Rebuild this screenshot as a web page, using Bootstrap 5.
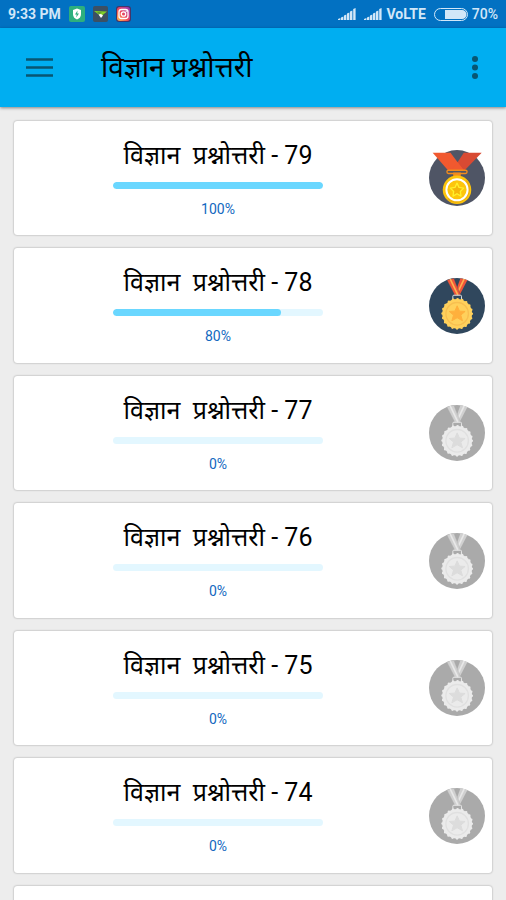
<!DOCTYPE html>
<html lang="hi">
<head>
<meta charset="utf-8">
<meta name="viewport" content="width=device-width, initial-scale=1">
<title>विज्ञान प्रश्नोत्तरी</title>
<link href="https://cdn.jsdelivr.net/npm/bootstrap@5.3.0/dist/css/bootstrap.min.css" rel="stylesheet">
<style>
  body { background: #ededed; font-family: Roboto, "Noto Sans", "Noto Sans Devanagari", sans-serif; }
  .status-bar { background: #0271c2; color: #d2e7f8; height: 28px; font-size: 14px; line-height: 28px; font-weight: 700; padding: 0 8px; }
  .battery-level { font-weight: 500; }
  .app-bar { background: #00aef1; height: 79px; padding: 0 16px 0 20px; box-shadow: 0 1px 3px rgba(0,0,0,.45); z-index: 1; }
  .app-title { font-size: 28px; line-height: 40px; color: #000; margin-left: 43px; }
  .quiz-list { padding: 14px; gap: 13px; scrollbar-width: none; }
  .quiz-list::-webkit-scrollbar { display: none; }
  .quiz { min-height: 114px; padding: 0 7px; border-radius: 3px; background: #fff; box-shadow: 0 0 2px rgba(0,0,0,.4); }
  .quiz:nth-child(even) { min-height: 115px; }
  .quiz-body { padding: 0 14px 2px 0; }
  .quiz-title { font-size: 25px; line-height: 40px; color: #000; }
  .quiz .progress { width: 210px; height: 7px; border-radius: 4px; margin-top: 6px; background: #e3f7ff; }
  .quiz .progress-bar { background: #6ad7ff; border-radius: 4px; }
  .quiz-score { font-size: 14px; line-height: 20px; color: #1268c0; margin-top: 10px; }
  .medal { width: 56px; height: 56px; overflow: visible; }
  .medal-color { --disc: #30475d; --ribbon: #f0563b; --stripe: #ffb34f; --clasp: #dce5ea; --coin: #ffd15c; --ring: #f8bf50; --star: #ffb03c; }
  .medal-grey { --disc: #aaa; --ribbon: #d0d0d0; --stripe: #e8e8e8; --clasp: #e8e8e8; --coin: #ebebeb; --ring: #e0e0e0; --star: #dcdcdc; }
</style>
<script src="https://cdn.jsdelivr.net/npm/bootstrap@5.3.0/dist/js/bootstrap.bundle.min.js"></script>
</head>
<body>
<svg class="d-none" aria-hidden="true">
  <symbol id="signal" viewBox="0 0 18 12">
    <path fill="currentColor" d="M0 12v-1l2.400-1v2zM3 12V9.500l2.400-1V12zM6 12V7.500l2.400-1V12zM9 12V5.500l2.400-1V12zM12 12V3.500l2.400-1V12zM15.200 12V1l2.400-1v12z"/>
  </symbol>
  <symbol id="medal" viewBox="26 28 169 169">
    <circle cx="110.500" cy="112.500" r="84.500" fill="var(--disc)"/>
    <path fill="var(--ribbon)" d="M121 29l21 5-24 46h-16z"/>
    <path fill="none" stroke="var(--stripe)" stroke-width="5" d="M132 31l-23 48"/>
    <path fill="var(--ribbon)" stroke="var(--disc)" d="M80 34l21-5 20 51h-17z"/>
    <path fill="none" stroke="var(--stripe)" stroke-width="5" d="M90 31l23 48"/>
    <path fill="none" stroke="var(--clasp)" stroke-width="3" d="M98 94V83q0-3 3-3h20q3 0 3 3v11"/>
    <circle cx="111" cy="136" r="44" fill="none" stroke="var(--coin)" stroke-width="8" stroke-linecap="round" stroke-dasharray="0 13.820"/>
    <circle cx="111" cy="136" r="45" fill="var(--coin)"/>
    <circle cx="111" cy="136" r="34" fill="none" stroke="var(--ring)" stroke-width="4"/>
    <path fill="var(--star)" stroke="var(--star)" stroke-width="3" stroke-linejoin="round" d="M111 112l7 16 17 1-13 11 5 17-16-9-16 9 5-17-13-11 17-1z"/>
  </symbol>
</svg>

<div class="vh-100 d-flex flex-column overflow-hidden">
  <div class="status-bar d-flex align-items-center flex-shrink-0">
    <span>9:33 PM</span>
    <svg class="ms-2" width="16" height="16" viewBox="0 0 16 16" aria-hidden="true"><rect width="16" height="16" rx="2" fill="#2daf7d"/><path fill="#fff" d="M8 2.500l4 1.500v4q0 4-4 5.500Q4 12 4 8V4z"/><path fill="#2daf7d" d="M8.500 4.500L6 8.500h1.700l-.5 3 2.800-4H8.200z"/></svg>
    <svg class="ms-2" width="15" height="16" viewBox="0 0 15 16" aria-hidden="true"><rect width="15" height="16" rx="2" fill="#3c5063"/><path fill="#80cf28" d="M1 5l13 .5L8.500 10 5 8z"/><path fill="#294153" d="M4 6.500l5 .3-3 .7z"/><path fill="#fff" d="M5.500 8.500L8 8l2 1.500L8 12z"/></svg>
    <svg class="ms-2" width="15" height="16" viewBox="0 0 15 16" aria-hidden="true"><defs><linearGradient id="insta" x1="0" y1="1" x2="1" y2="0"><stop offset="0" stop-color="#ffc34d"/><stop offset=".45" stop-color="#f14858"/><stop offset="1" stop-color="#8a3ac4"/></linearGradient></defs><rect width="15" height="16" rx="3" fill="#443568"/><rect x="1" y="1" width="13" height="14" rx="3" fill="url(#insta)"/><g fill="none" stroke="#fff" stroke-width="1.300"><rect x="3" y="3.500" width="9" height="9" rx="2.500"/><circle cx="7.500" cy="8" r="2.200"/></g><circle cx="10.200" cy="5.300" r=".7" fill="#fff"/></svg>
    <svg class="ms-auto" width="18" height="12" aria-hidden="true"><use href="#signal"/></svg>
    <svg class="ms-2" width="18" height="12" aria-hidden="true"><use href="#signal"/></svg>
    <span class="ms-1">VoLTE</span>
    <svg class="ms-2" width="34" height="13" viewBox="0 0 34 13" aria-hidden="true"><rect x=".5" y=".5" width="33" height="12" rx="6" fill="none" stroke="currentColor"/><path fill="currentColor" d="M11 2h17a4.500 4.500 0 0 1 0 9H11z"/></svg>
    <span class="battery-level ms-1">70%</span>
  </div>

  <header class="app-bar d-flex align-items-center flex-shrink-0 position-relative">
    <button type="button" class="btn border-0 p-1 d-flex" aria-label="मेनू">
      <svg width="30" height="26" viewBox="0 0 30 26" aria-hidden="true"><path stroke="#085672" stroke-width="2.500" d="M2 4.500h27M2 12.500h27M2 20.500h27"/></svg>
    </button>
    <h1 class="app-title mb-0 fw-normal">विज्ञान प्रश्नोत्तरी</h1>
    <button type="button" class="btn border-0 p-1 ms-auto d-flex" aria-label="और विकल्प">
      <svg width="22" height="26" viewBox="0 0 22 26" aria-hidden="true"><g fill="#085672"><circle cx="11" cy="4" r="3"/><circle cx="11" cy="12.500" r="3"/><circle cx="11" cy="21" r="3"/></g></svg>
    </button>
  </header>

  <main class="quiz-list flex-grow-1 overflow-auto d-flex flex-column">
    <a href="#quiz-79" class="quiz d-flex align-items-center flex-shrink-0 text-decoration-none">
      <div class="quiz-body flex-grow-1 d-flex flex-column align-items-center">
        <h2 class="quiz-title mb-0 fw-normal">विज्ञान&nbsp; प्रश्नोत्तरी - 79</h2>
        <div class="progress" role="progressbar" aria-label="79" aria-valuenow="100" aria-valuemin="0" aria-valuemax="100"><div class="progress-bar" style="width:100%"></div></div>
        <div class="quiz-score">100%</div>
      </div>
      <svg class="medal flex-shrink-0" viewBox="26 28 169 169" aria-hidden="true">
        <circle cx="110.500" cy="112.500" r="84.500" fill="#4f5565"/>
        <path fill="#d84a33" d="M131 36h54l-52 54H96z"/>
        <path fill="#f1592f" d="M37 36h54l40 54H84z"/>
        <path fill="#f1592f" d="M84 66l8 24h-8zM92 90l20-25 20 25z"/>
        <rect x="80" y="89" width="61" height="10" rx="5" fill="#4f5565" stroke="#f28c1c" stroke-width="4"/>
        <path fill="#f28c1c" d="M99 96h23v14H99z"/>
        <circle cx="110.500" cy="148" r="43" fill="#fdc50c"/>
        <path fill="#eeb00a" d="M140 117a43 43 0 0 1-60 61z"/>
        <circle cx="110.500" cy="148" r="32" fill="#fdc50c" stroke="#fff" stroke-width="6"/>
        <path fill="#f5b60b" stroke="#fff02c" stroke-width="4" stroke-linejoin="round" d="M110.500 128l6 13 14 2-10 10 2 14-12-7-12 7 2-14-10-10 14-2z"/>
      </svg>
    </a>
    <a href="#quiz-78" class="quiz d-flex align-items-center flex-shrink-0 text-decoration-none">
      <div class="quiz-body flex-grow-1 d-flex flex-column align-items-center">
        <h2 class="quiz-title mb-0 fw-normal">विज्ञान&nbsp; प्रश्नोत्तरी - 78</h2>
        <div class="progress" role="progressbar" aria-label="78" aria-valuenow="80" aria-valuemin="0" aria-valuemax="100"><div class="progress-bar" style="width:80%"></div></div>
        <div class="quiz-score">80%</div>
      </div>
      <svg class="medal medal-color flex-shrink-0" aria-hidden="true"><use href="#medal"/></svg>
    </a>
    <a href="#quiz-77" class="quiz d-flex align-items-center flex-shrink-0 text-decoration-none">
      <div class="quiz-body flex-grow-1 d-flex flex-column align-items-center">
        <h2 class="quiz-title mb-0 fw-normal">विज्ञान&nbsp; प्रश्नोत्तरी - 77</h2>
        <div class="progress" role="progressbar" aria-label="77" aria-valuenow="0" aria-valuemin="0" aria-valuemax="100"><div class="progress-bar" style="width:0%"></div></div>
        <div class="quiz-score">0%</div>
      </div>
      <svg class="medal medal-grey flex-shrink-0" aria-hidden="true"><use href="#medal"/></svg>
    </a>
    <a href="#quiz-76" class="quiz d-flex align-items-center flex-shrink-0 text-decoration-none">
      <div class="quiz-body flex-grow-1 d-flex flex-column align-items-center">
        <h2 class="quiz-title mb-0 fw-normal">विज्ञान&nbsp; प्रश्नोत्तरी - 76</h2>
        <div class="progress" role="progressbar" aria-label="76" aria-valuenow="0" aria-valuemin="0" aria-valuemax="100"><div class="progress-bar" style="width:0%"></div></div>
        <div class="quiz-score">0%</div>
      </div>
      <svg class="medal medal-grey flex-shrink-0" aria-hidden="true"><use href="#medal"/></svg>
    </a>
    <a href="#quiz-75" class="quiz d-flex align-items-center flex-shrink-0 text-decoration-none">
      <div class="quiz-body flex-grow-1 d-flex flex-column align-items-center">
        <h2 class="quiz-title mb-0 fw-normal">विज्ञान&nbsp; प्रश्नोत्तरी - 75</h2>
        <div class="progress" role="progressbar" aria-label="75" aria-valuenow="0" aria-valuemin="0" aria-valuemax="100"><div class="progress-bar" style="width:0%"></div></div>
        <div class="quiz-score">0%</div>
      </div>
      <svg class="medal medal-grey flex-shrink-0" aria-hidden="true"><use href="#medal"/></svg>
    </a>
    <a href="#quiz-74" class="quiz d-flex align-items-center flex-shrink-0 text-decoration-none">
      <div class="quiz-body flex-grow-1 d-flex flex-column align-items-center">
        <h2 class="quiz-title mb-0 fw-normal">विज्ञान&nbsp; प्रश्नोत्तरी - 74</h2>
        <div class="progress" role="progressbar" aria-label="74" aria-valuenow="0" aria-valuemin="0" aria-valuemax="100"><div class="progress-bar" style="width:0%"></div></div>
        <div class="quiz-score">0%</div>
      </div>
      <svg class="medal medal-grey flex-shrink-0" aria-hidden="true"><use href="#medal"/></svg>
    </a>
    <div class="quiz flex-shrink-0"></div>
  </main>
</div>
</body>
</html>
